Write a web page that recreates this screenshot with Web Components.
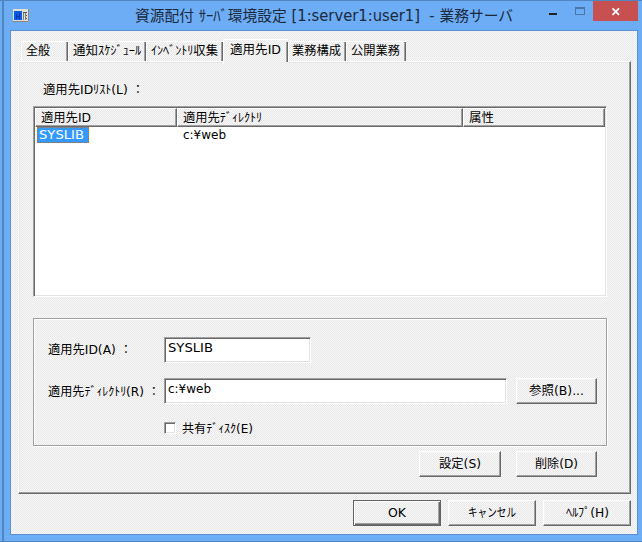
<!DOCTYPE html>
<html lang="ja"><head><meta charset="utf-8"><title>資源配付 サーバ環境設定</title>
<style>
html,body{margin:0;width:642px;height:542px;overflow:hidden}
body{font:12px/16px "DejaVu Sans","Noto Sans CJK JP",sans-serif;color:#000;--face:repeating-conic-gradient(#f8f8f8 0 25%,#e8e8e8 0 50%) 0 0/2px 2px}
</style></head><body>
<env-dialog></env-dialog>
<script>
// Text run condensed or widened to an exact advance; half-width kana is set slightly tighter.
customElements.define('fit-text', class extends HTMLElement{
  connectedCallback(){
    const r=this.attachShadow({mode:'open'});
    r.innerHTML='<style>:host{display:block;height:16px;white-space:pre;flex:none}span{display:inline-block;transform-origin:0 50%}i{font-style:normal;letter-spacing:-.01em}</style><span></span>';
    const s=r.querySelector('span'),w=+this.getAttribute('w');
    s.innerHTML=this.textContent.replace(/[\uff66-\uff9f]+/g,m=>'<i>'+m+'</i>');
    this.style.width=w+'px';
    s.style.transform='scaleX('+w/s.getBoundingClientRect().width+')';
  }
});
const define=(name,html)=>customElements.define(name,class extends HTMLElement{
  constructor(){super();this.attachShadow({mode:'open'}).innerHTML=html}
});
define('push-button',`<style>:host{display:flex;box-sizing:border-box;height:26px;justify-content:center;align-items:center;background:var(--face);border:1px solid;border-color:#fff #696969 #696969 #fff;box-shadow:inset -1px -1px #a0a0a0,inset 1px 1px #f4f4f4;flex:none}
:host([primary]){border-color:#646464;box-shadow:inset 1px 1px #fff,inset -1px -1px #696969,inset -2px -2px #a0a0a0}</style><slot></slot>`);
define('text-field',`<style>:host{display:block;box-sizing:border-box;height:26px;background:#fff;border:1px solid;border-color:#a0a0a0 #fff #fff #a0a0a0;box-shadow:inset 1px 1px #696969,inset -1px -1px #e3e3e3;padding:2px 0 0 3px;flex:none}</style><slot></slot>`);
define('tab-item',`<style>:host{display:flex;box-sizing:border-box;height:20px;margin-top:2px;padding:1px 0 0 4px;border:solid #fff;border-width:1px 0 0 1px;border-radius:2px 0 0 0;box-shadow:inset -1px 0 #696969,inset -2px 0 #a0a0a0;background:var(--face);flex:none}
:host([active]){height:25px;margin-top:0;position:relative;z-index:1;padding-top:2px;padding-left:6px;box-shadow:none}
:host([active])::after{content:"";position:absolute;right:0;top:2px;width:1px;height:20px;background:#696969;box-shadow:-1px 0 #a0a0a0}</style><slot></slot>`);
define('title-bar',`<style>:host{display:grid;grid-template-columns:9px 122px 1fr 27px 18px 45px 4px;height:29px;background:#6cadf6;align-items:start;color:#1c2a3c;font-size:15px}
.i{grid-column:2;margin-top:8px}.t{grid-column:3;padding-top:7px}svg{display:block}.m{margin-top:12px}.x{margin-top:6px}
.c{background:#c75050;height:20px}</style>
<svg class="i" width="16" height="13"><rect width="16" height="13" fill="#e2ded4"/><path d="M0 12.5H15.5V0" stroke="#888" fill="none"/><rect x="1" y="2" width="8" height="9" fill="#0a5ce4"/><path d="M3.500 10V5M6.500 10V4M3 7.500h4" stroke="#0838a8" fill="none"/><path d="M10.500 3v8M12.500 3v8" stroke="#7b7f84" fill="none"/><path d="M10 3.500h4M13 6.500h1M13 9.500h1" stroke="#55595e" fill="none"/></svg>
<div class="t"><slot></slot></div>
<svg class="m" width="10" height="3"><rect x="1" width="8" height="2" fill="#222"/></svg>
<svg class="x" width="12" height="9"><rect x=".5" y=".5" width="9" height="7" fill="none" stroke="#4a76a8"/><path d="M0 1h10" stroke="#4a76a8" stroke-width="2"/></svg>
<svg class="c" width="45" height="20"><path d="M19.500 7.300l6.500 6.500M26 7.300l-6.500 6.500" stroke="#fff" stroke-width="1.8"/></svg>`);
define('list-view',`<style>:host{display:flex;flex-direction:column;box-sizing:border-box;height:191px;background:#fff;border:1px solid;border-color:#a0a0a0 #fff #fff #a0a0a0;box-shadow:inset 1px 1px #696969,inset -1px -1px #e3e3e3;padding:1px}
.h,.r{display:grid;grid-template-columns:142px 286px 1fr;flex:none}.h{height:19px}
.h div{background:var(--face);border:1px solid;border-color:#fff #696969 #696969 #fff;box-shadow:inset -1px -1px #a0a0a0;padding:1px 0 0 5px}
.r div{padding-left:6px}.r .s{width:52px;height:16px;box-sizing:border-box;margin-left:2px;padding:0 0 0 2px;background:#3399ff;outline:1px dotted #c86a1a;outline-offset:-1px;color:#fff}</style>
<div class="h"><div><fit-text w="50">適用先ID</fit-text></div><div><fit-text w="79">適用先ﾃﾞｨﾚｸﾄﾘ</fit-text></div><div><fit-text w="25">属性</fit-text></div></div>
<div class="r"><div class="s"><fit-text w="45">SYSLIB</fit-text></div><div><fit-text w="43">c:¥web</fit-text></div></div>`);
define('group-box',`<style>:host{display:grid;box-sizing:border-box;height:128px;border:1px solid #a0a0a0;box-shadow:1px 1px #fff,inset 1px 1px #fff;grid-template-columns:116px 343px 90px;padding:18px 0 0 14px;grid-template-rows:41px 43px 20px}
.l{padding-top:5px}.l2{padding-top:6px}.n{width:147px}.k{grid-column:2;display:flex;gap:6px}.k b{width:12px;height:12px;margin-top:1px;box-sizing:border-box;background:#fff;border:1px solid;border-color:#a0a0a0 #fff #fff #a0a0a0;box-shadow:inset 1px 1px #696969,inset -1px -1px #e3e3e3}
.b{margin-left:9px;width:81px}</style>
<fit-text class="l" w="84">適用先ID(A) ：</fit-text><text-field class="n"><fit-text w="45">SYSLIB</fit-text></text-field><span></span>
<fit-text class="l2" w="112">適用先ﾃﾞｨﾚｸﾄﾘ(R) ：</fit-text><text-field><fit-text w="43">c:¥web</fit-text></text-field><push-button class="b"><fit-text w="55">参照(B)...</fit-text></push-button>
<div class="k"><b></b><fit-text w="71">共有ﾃﾞｨｽｸ(E)</fit-text></div>`);
define('tab-panel',`<style>:host{display:flex;flex-direction:column;box-sizing:border-box;height:433px;border:1px solid;border-color:#fff #696969 #696969 #fff;box-shadow:inset -1px -1px #a0a0a0,inset 1px 1px #e6e6e6;padding:20px 23px 0 14px}
.l{margin:0 0 8px 10px}.g{margin-top:21px}.b{display:flex;justify-content:flex-end;gap:15px;padding:5px 10px 0 0}</style>
<fit-text class="l" w="101">適用先IDﾘｽﾄ(L) ：</fit-text><list-view></list-view><group-box class="g"></group-box>
<div class="b"><push-button style="width:82px"><fit-text w="42">設定(S)</fit-text></push-button><push-button style="width:81px"><fit-text w="43">削除(D)</fit-text></push-button></div>`);
define('env-dialog',`<style>:host{display:block;box-sizing:border-box;width:642px;height:542px;background:#6cadf6;border-top:1px solid #4f86bf;border-bottom:1px solid #4f86bf;padding-left:4px;box-shadow:inset 2px 0 #6cadf6,inset 4px 0 #4f86bf}
.c{box-sizing:border-box;margin-left:6px;width:628px;height:505px;border:1px solid #5a91d2;background:var(--face);padding:8px 0 0 7px}
.p{width:613px}.t{display:flex;height:22px;padding-left:3px}.f{display:flex;gap:7px;justify-content:flex-end;width:613px;margin-top:6px}</style>
<title-bar><fit-text w="378">資源配付 ｻｰﾊﾞ環境設定 [1:server1:user1]  - 業務サーバ</fit-text></title-bar>
<div class="c"><div class="t">
<tab-item style="width:47px"><fit-text w="24">全般</fit-text></tab-item>
<tab-item style="width:78px"><fit-text w="68">通知ｽｹｼﾞｭｰﾙ</fit-text></tab-item>
<tab-item style="width:77px"><fit-text w="67">ｲﾝﾍﾞﾝﾄﾘ収集</fit-text></tab-item>
<tab-item active style="width:65px"><fit-text w="51">適用先ID</fit-text></tab-item>
<tab-item style="width:58px;padding-left:3px"><fit-text w="49">業務構成</fit-text></tab-item>
<tab-item style="width:60px"><fit-text w="49">公開業務</fit-text></tab-item>
</div><tab-panel class="p"></tab-panel>
<div class="f"><push-button primary style="width:88px"><fit-text w="18">OK</fit-text></push-button><push-button style="width:88px"><fit-text w="48">キャンセル</fit-text></push-button><push-button style="width:88px"><fit-text w="43">ﾍﾙﾌﾟ(H)</fit-text></push-button></div></div>`);
</script></body></html>
